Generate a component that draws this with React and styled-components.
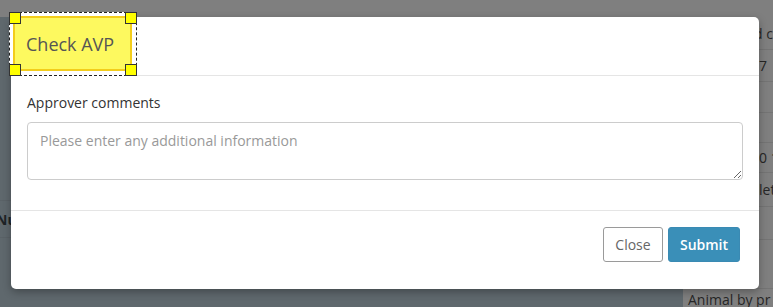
import React from "react";
import styled, { createGlobalStyle } from "styled-components";

const GlobalStyle = createGlobalStyle`
  html, body {
    margin: 0;
    padding: 0;
    background: #7f7f7f;
  }
  body {
    font-family: "Open Sans", "Noto Sans", sans-serif;
    font-size: 14px;
    color: #333;
  }
  * {
    box-sizing: border-box;
  }
`;

const Stage = styled.div`
  display: grid;
  width: 773px;
  height: 307px;
  overflow: hidden;
`;

// dimmed page behind the modal
const Backdrop = styled.div`
  grid-area: 1 / 1;
  display: grid;
  grid-template-rows: 17px 1fr;
  grid-template-columns: 683px 1fr;
`;

const TopBand = styled.div`
  grid-column: 1 / 3;
  background: #7f7f7f;
`;

const SidePane = styled.div`
  background: #5f686d;
  display: flex;
  flex-direction: column;
  padding-top: 183px;
`;

const SideRow = styled.div`
  height: 38px;
  border-top: 1px solid #5a6267;
  border-bottom: 1px solid #5a6267;
  display: flex;
  align-items: center;
  font-weight: 700;
  color: #1e2326;
  margin-left: -4px;
`;

const TableColumn = styled.div`
  background: #7f7f7f;
  display: flex;
  flex-direction: column;
`;

const Cell = styled.div`
  height: ${(p) => p.$h}px;
  flex-shrink: 0;
  border-bottom: 1px solid #747474;
  display: flex;
  align-items: center;
  padding-left: ${(p) => p.$indent}px;
  white-space: nowrap;
  color: #262626;
`;

const Dialog = styled.div`
  grid-area: 1 / 1;
  align-self: start;
  justify-self: start;
  margin: 17px 0 0 11px;
  width: 748px;
  height: 272px;
  background: #fff;
  border-radius: 5px;
  box-shadow: 0 3px 9px rgba(0, 0, 0, 0.3);
  display: flex;
  flex-direction: column;
`;

const Header = styled.div`
  height: 59px;
  flex-shrink: 0;
  border-bottom: 1px solid #e5e5e5;
  display: flex;
  align-items: flex-start;
`;

const SelectionFrame = styled.div`
  position: relative;
  margin: -5px 0 0 -2px;
  width: 128px;
  height: 64px;
  padding: 3px 4px 4px 3px;
  background: #fff;
  border: 1px dashed #222;
`;

const Handle = styled.span`
  position: absolute;
  width: 12px;
  height: 12px;
  background: #ffff00;
  border: 1px solid #333;
  ${(p) => (p.$top ? "top: -1px;" : "bottom: -1px;")}
  ${(p) => (p.$left ? "left: -1px;" : "right: -1px;")}
`;

const Title = styled.h4`
  margin: 0;
  height: 100%;
  background: #fdf95f;
  border: 2px solid #f3cd1a;
  display: flex;
  align-items: center;
  padding-left: 11px;
  font-size: 18px;
  font-weight: 400;
  color: #555;
`;

const Body = styled.div`
  flex: 1;
  padding: 17px 16px 29px;
  display: flex;
  flex-direction: column;
`;

const Label = styled.label`
  font-size: 14px;
  line-height: 20px;
  color: #333;
  margin-bottom: 9px;
`;

const TextArea = styled.textarea`
  width: 100%;
  height: 58px;
  padding: 8px 12px;
  border: 1px solid #ccc;
  border-radius: 4px;
  font-family: inherit;
  font-size: 14px;
  line-height: 20px;
  color: #555;
  resize: vertical;
  outline: none;

  &::placeholder {
    color: #999;
  }
`;

const Footer = styled.div`
  height: 79px;
  flex-shrink: 0;
  border-top: 1px solid #e5e5e5;
  display: flex;
  justify-content: flex-end;
  align-items: flex-start;
  gap: 5px;
  padding: 16px 19px 0 0;
`;

const Button = styled.button`
  height: 35px;
  width: ${(p) => (p.$primary ? 72 : 60)}px;
  padding: 0;
  border-radius: 3px;
  font-family: inherit;
  font-size: 14px;
  font-weight: ${(p) => (p.$primary ? 600 : 400)};
  cursor: pointer;
  border: 1px solid ${(p) => (p.$primary ? "#3a8ab3" : "#9a9a9a")};
  background: ${(p) => (p.$primary ? "#3a8fb8" : "#fff")};
  color: ${(p) => (p.$primary ? "#fff" : "#666")};
`;

const rows = [
  { h: 33, text: "d c", indent: 71 },
  { h: 32, text: "7", indent: 76 },
  { h: 31, text: "", indent: 0 },
  { h: 30, text: "", indent: 0 },
  { h: 30, text: "0 1", indent: 76 },
  { h: 34, text: "let", indent: 76 },
  { h: 33, text: "", indent: 0 },
  { h: 49, text: "", indent: 0 },
  { h: 22, text: "Animal by pr", indent: 5 },
];

export default function App() {
  return (
    <>
      <GlobalStyle />
      <Stage>
        <Backdrop>
          <TopBand />
          <SidePane>
            <SideRow>Nu</SideRow>
          </SidePane>
          <TableColumn>
            {rows.map((r, i) => (
              <Cell key={i} $h={r.h} $indent={r.indent}>
                {r.text}
              </Cell>
            ))}
          </TableColumn>
        </Backdrop>

        <Dialog>
          <Header>
            <SelectionFrame>
              <Title>Check AVP</Title>
              <Handle $top $left />
              <Handle $top />
              <Handle $left />
              <Handle />
            </SelectionFrame>
          </Header>
          <Body>
            <Label>Approver comments</Label>
            <TextArea placeholder="Please enter any additional information" />
          </Body>
          <Footer>
            <Button>Close</Button>
            <Button $primary>Submit</Button>
          </Footer>
        </Dialog>
      </Stage>
    </>
  );
}
